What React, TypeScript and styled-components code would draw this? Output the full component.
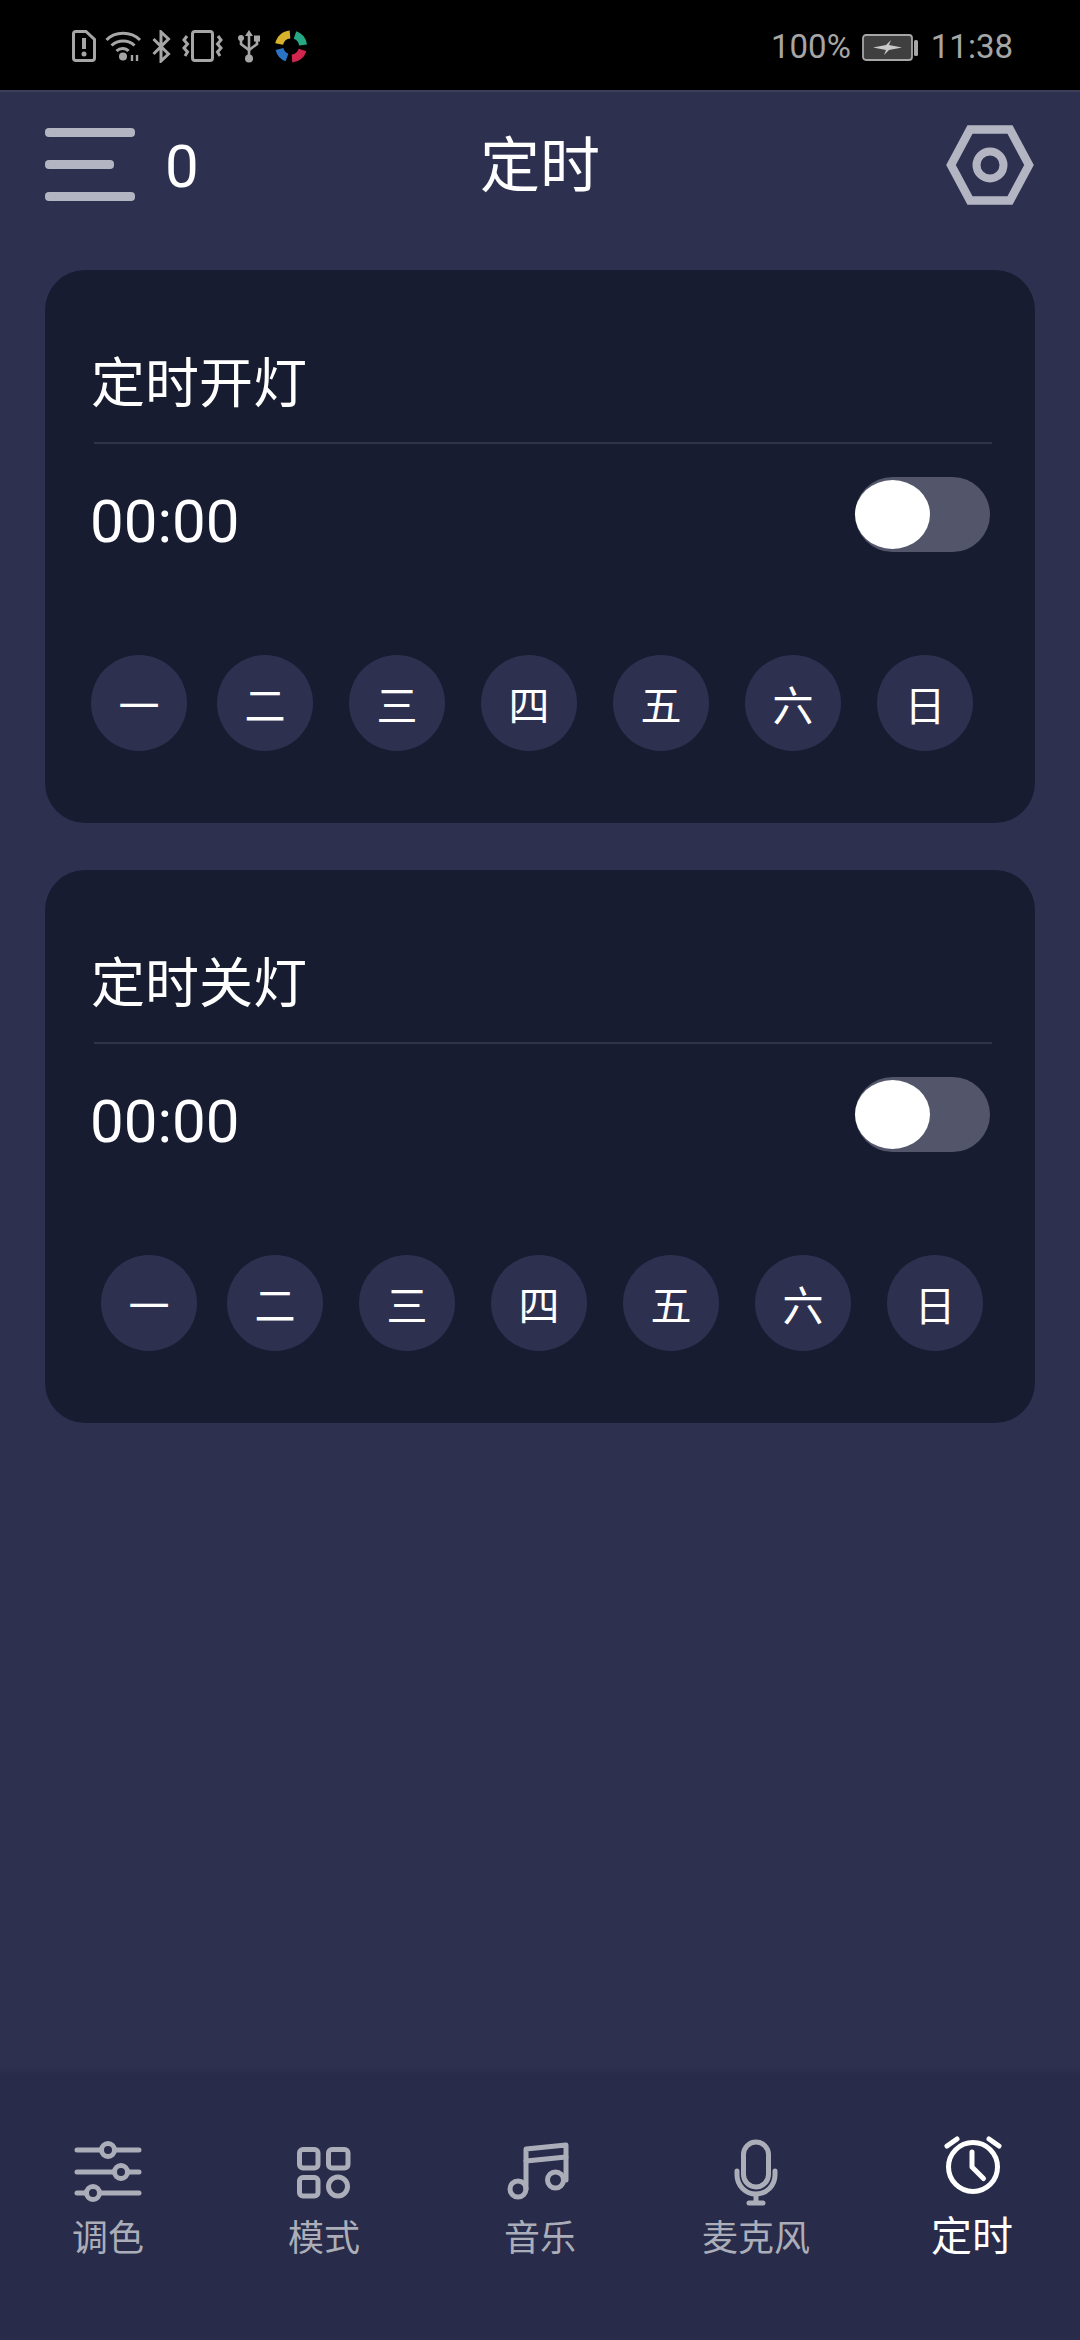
import { FC, ReactElement, ReactNode } from "react";
import styled, { createGlobalStyle } from "styled-components";

const GlobalStyle = createGlobalStyle`
  html, body {
    margin: 0;
    padding: 0;
    background: #2e3050;
  }
  * {
    box-sizing: border-box;
  }
`;

const Page = styled.div`
  width: 1080px;
  height: 2340px;
  display: flex;
  flex-direction: column;
  background: #2e3050;
  color: #fff;
  font-family: Roboto, "Noto Sans CJK SC", sans-serif;
  overflow: hidden;
`;

const StatusBar = styled.div`
  height: 90px;
  flex: none;
  display: flex;
  align-items: center;
  justify-content: space-between;
  padding: 2px 67px 0 72px;
  background: #000;
  color: #a6a6a6;
`;

const StatusIcons = styled.div`
  display: flex;
  align-items: center;
`;

const StatusIcon = styled.svg<{ $left?: number }>`
  display: block;
  flex: none;
  margin-left: ${(p) => p.$left ?? 0}px;
`;

const StatusRight = styled.div`
  display: flex;
  align-items: center;
  margin-top: 2px;
  font-size: 33px;
  line-height: 40px;
`;

const Clock = styled.span`
  margin-left: 13px;
`;

const Header = styled.header`
  flex: none;
  height: 180px;
  display: grid;
  grid-template-columns: 1fr auto 1fr;
  align-items: center;
  padding: 0 45px 33px;
  border-top: 2px solid #3c3e5a;
`;

const HeaderLeft = styled.div`
  display: flex;
  align-items: center;
  gap: 30px;
`;

const Hamburger = styled.div`
  width: 90px;
  display: flex;
  flex-direction: column;
  gap: 23px;
`;

const HamburgerBar = styled.span<{ $short?: boolean }>`
  display: block;
  height: 9px;
  width: ${(p) => (p.$short ? 69 : 90)}px;
  border-radius: 4px;
  background: #b4b5c3;
`;

const Count = styled.span`
  margin-top: 5px;
  font-size: 60px;
  line-height: 70px;
`;

const Title = styled.h1`
  margin: 5px 0 0;
  font-size: 60px;
  line-height: 70px;
  font-weight: 400;
`;

const SettingsButton = styled.svg`
  justify-self: end;
  display: block;
`;

const Content = styled.main`
  flex: 1;
  display: flex;
  flex-direction: column;
  gap: 47px;
  padding: 0 45px;
`;

const Card = styled.section`
  height: 553px;
  padding: 85px 45px 0 46px;
  border-radius: 40px;
  background: #181c30;
`;

const CardTitle = styled.h2`
  margin: 0;
  font-size: 54px;
  line-height: 60px;
  font-weight: 400;
`;

const Divider = styled.div`
  height: 2px;
  margin: 27px -2px 0 3px;
  background: #2f3249;
`;

const TimeRow = styled.div`
  display: flex;
  justify-content: space-between;
  align-items: flex-start;
  margin-top: 33px;
`;

const Time = styled.span`
  margin: 7px 0 0 -1px;
  font-size: 60px;
  line-height: 76px;
`;

const Toggle = styled.div`
  position: relative;
  width: 135px;
  height: 75px;
  border-radius: 38px;
  background: #53566a;
`;

const ToggleThumb = styled.span`
  position: absolute;
  left: 0;
  top: 3px;
  width: 75px;
  height: 69px;
  border-radius: 50%;
  background: #fff;
`;

const DayRow = styled.div<{ $inset: number }>`
  display: flex;
  gap: 36px;
  margin-top: 95px;
  padding-left: ${(p) => p.$inset}px;
`;

const Day = styled.span`
  flex: none;
  width: 96px;
  height: 96px;
  display: flex;
  align-items: center;
  justify-content: center;
  border-radius: 50%;
  background: #2e3050;
  font-size: 41px;
  &:first-child {
    margin-right: -6px;
  }
`;

const TabBar = styled.nav`
  flex: none;
  height: 275px;
  display: grid;
  grid-template-columns: repeat(5, 216px);
  padding-top: 75px;
  background: linear-gradient(#2e3050, #282b49 10px);
`;

const Tab = styled.div<{ $active?: boolean }>`
  display: flex;
  flex-direction: column;
  align-items: center;
  color: ${(p) => (p.$active ? "#fff" : "#abaeb9")};
`;

const TabIcon = styled.svg`
  display: block;
  flex: none;
  overflow: visible;
  fill: none;
  stroke: currentColor;
  stroke-width: 5;
  stroke-linecap: round;
  stroke-linejoin: round;
`;

const TabLabel = styled.span<{ $active?: boolean }>`
  margin-top: ${(p) => (p.$active ? 9 : 11)}px;
  font-size: ${(p) => (p.$active ? 41 : 36)}px;
  line-height: 44px;
`;

const SimIcon = () => (
  <StatusIcon width="24" height="32" viewBox="0 0 24 32" fill="none" stroke="#a6a6a6" strokeWidth="3">
    <path d="M3.500 1.500h10.500l8.500 8V28a2.500 2.500 0 0 1-2.500 2.500h-16A2.500 2.500 0 0 1 1.500 28V4a2.500 2.500 0 0 1 2-2.500z" />
    <path d="M12 8v11" strokeWidth="4" />
    <circle cx="12" cy="24" r="2.500" fill="#a6a6a6" stroke="none" />
  </StatusIcon>
);

const WifiIcon = () => (
  <StatusIcon $left={9} width="37" height="32" viewBox="0 0 37 32" fill="none" stroke="#a6a6a6" strokeWidth="3">
    <path d="M1.500 10C10 1 26 1 35 10" />
    <path d="M6.500 15.500c6.500-6 17-6 23 0" />
    <path d="M11.500 21c3.500-3.500 9-3.500 12 0" />
    <circle cx="18" cy="26.500" r="4" fill="#a6a6a6" stroke="none" />
    <path d="M27 25v6M32 25v6" strokeWidth="2.400" />
  </StatusIcon>
);

const BluetoothIcon = () => (
  <StatusIcon $left={10} width="19" height="33" viewBox="0 0 19 33" fill="none" stroke="#a6a6a6" strokeWidth="3">
    <path d="M1.500 9l15 15-7.500 7V2l7.500 7-15 15" />
  </StatusIcon>
);

const VibrateIcon = () => (
  <StatusIcon $left={11} width="41" height="32" viewBox="0 0 41 32" fill="none" stroke="#a6a6a6" strokeWidth="3">
    <rect x="10.500" y="1.500" width="20" height="29" rx="2.500" />
    <path d="M5 6L2 10l3.500 4L2 18l3.500 4L3 26" />
    <path d="M36 6l3 4-3.500 4 3.500 4-3.500 4 2.500 4" />
  </StatusIcon>
);

const UsbIcon = () => (
  <StatusIcon $left={15} width="22" height="33" viewBox="0 0 22 33" fill="#a6a6a6" stroke="#a6a6a6" strokeWidth="2.600">
    <path d="M11 3v26" fill="none" />
    <path d="M11 0l4 6H7z" stroke="none" />
    <circle cx="11" cy="28.500" r="4" stroke="none" />
    <path d="M3 9v5l8 6 8-6V9" fill="none" />
    <circle cx="3" cy="8" r="3" stroke="none" />
    <rect x="16" y="5.500" width="6" height="6" stroke="none" />
  </StatusIcon>
);

// four coloured swooshes round a dark middle
const PinwheelIcon = () => (
  <StatusIcon $left={15} width="32" height="33" viewBox="0 0 32 33" fill="none" strokeWidth="8">
    <path d="M4.200 14A12 12 0 0 1 15 4.500" stroke="#d9b22c" />
    <path d="M20 5A12 12 0 0 1 28 15" stroke="#26a884" />
    <path d="M27.500 20A12 12 0 0 1 17 28.500" stroke="#d2264f" />
    <path d="M12 27.500A12 12 0 0 1 4.500 19" stroke="#2b74c4" />
  </StatusIcon>
);

const BatteryIcon = () => (
  <StatusIcon $left={11} width="56" height="27" viewBox="0 0 56 27">
    <rect x="1" y="1" width="49" height="25" rx="3" fill="#3f3f3f" stroke="#a6a6a6" strokeWidth="1.800" />
    <path d="M11 13.500l13-2.500 5-5-2 5 13 2.500-13 2.500-5 5 2-5z" fill="#c8c8c8" />
    <rect x="52" y="6" width="4" height="16" rx="1.500" fill="#a6a6a6" />
  </StatusIcon>
);

const HexagonIcon = () => (
  <SettingsButton width="90" height="80" viewBox="0 0 90 80" fill="none" stroke="#b4b5c3">
    <path d="M25 4.500h40L84 40 65 75.500H25L6 40z" strokeWidth="8.500" strokeLinejoin="miter" />
    <circle cx="45" cy="40" r="13.500" strokeWidth="8" />
  </SettingsButton>
);

const SlidersIcon = () => (
  <TabIcon width="80" height="66" viewBox="0 0 80 66">
    <path d="M9 10h24M47 10h24M9 32h37M60 32h11M9 53h9M32 53h39" />
    <circle cx="40" cy="10" r="6.500" />
    <circle cx="53" cy="32" r="6.500" />
    <circle cx="25" cy="53" r="6.500" />
  </TabIcon>
);

const ModesIcon = () => (
  <TabIcon width="80" height="66" viewBox="0 0 80 66">
    <rect x="15.500" y="9.500" width="18.500" height="18.500" rx="3.500" />
    <rect x="44.500" y="9.500" width="19.500" height="18.500" rx="3.500" />
    <rect x="15.500" y="37.500" width="18.500" height="18.500" rx="3.500" />
    <circle cx="54" cy="46.500" r="9.500" />
  </TabIcon>
);

const MusicIcon = () => (
  <TabIcon width="80" height="66" viewBox="0 0 80 66">
    <circle cx="18" cy="49" r="8" />
    <circle cx="55.500" cy="40" r="8" />
    <path d="M26 49V9l40-4v35" />
    <path d="M26 21l40-4" />
  </TabIcon>
);

const MicIcon = () => (
  <TabIcon width="80" height="66" viewBox="0 0 80 66">
    <rect x="27.500" y="2" width="25" height="45" rx="12.500" />
    <path d="M21 31v4a19 19 0 0 0 38 0v-4" />
    <path d="M40 55v8M33 63h14" />
  </TabIcon>
);

const AlarmIcon = () => (
  <TabIcon width="80" height="66" viewBox="0 0 80 66">
    <circle cx="41" cy="27" r="24.500" />
    <path d="M40 12v15l11.500 11.500" />
    <path d="M15 6l10-7M57-1l10 7" />
  </TabIcon>
);

type TimerCardProps = {
  title: string;
  inset: number;
};

const DAYS = ["一", "二", "三", "四", "五", "六", "日"];

const TimerCard: FC<TimerCardProps> = ({ title, inset }): ReactElement => (
  <Card>
    <CardTitle>{title}</CardTitle>
    <Divider />
    <TimeRow>
      <Time>00:00</Time>
      <Toggle>
        <ToggleThumb />
      </Toggle>
    </TimeRow>
    <DayRow $inset={inset}>
      {DAYS.map((day) => (
        <Day key={day}>{day}</Day>
      ))}
    </DayRow>
  </Card>
);

const TABS: { label: string; icon: ReactNode; active?: boolean }[] = [
  { label: "调色", icon: <SlidersIcon /> },
  { label: "模式", icon: <ModesIcon /> },
  { label: "音乐", icon: <MusicIcon /> },
  { label: "麦克风", icon: <MicIcon /> },
  { label: "定时", icon: <AlarmIcon />, active: true },
];

export default function App(): ReactElement {
  return (
    <Page>
      <GlobalStyle />
      <StatusBar>
        <StatusIcons>
          <SimIcon />
          <WifiIcon />
          <BluetoothIcon />
          <VibrateIcon />
          <UsbIcon />
          <PinwheelIcon />
        </StatusIcons>
        <StatusRight>
          <span>100%</span>
          <BatteryIcon />
          <Clock>11:38</Clock>
        </StatusRight>
      </StatusBar>
      <Header>
        <HeaderLeft>
          <Hamburger>
            <HamburgerBar />
            <HamburgerBar $short />
            <HamburgerBar />
          </Hamburger>
          <Count>0</Count>
        </HeaderLeft>
        <Title>定时</Title>
        <HexagonIcon />
      </Header>
      <Content>
        <TimerCard title="定时开灯" inset={0} />
        <TimerCard title="定时关灯" inset={10} />
      </Content>
      <TabBar>
        {TABS.map((tab) => (
          <Tab key={tab.label} $active={tab.active}>
            {tab.icon}
            <TabLabel $active={tab.active}>{tab.label}</TabLabel>
          </Tab>
        ))}
      </TabBar>
    </Page>
  );
}
